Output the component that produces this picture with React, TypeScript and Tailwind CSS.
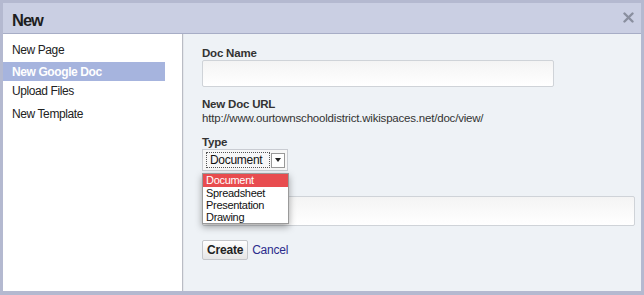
const sideItems = ["New Page", "New Google Doc", "Upload Files", "New Template"];
const docTypes = ["Document", "Spreadsheet", "Presentation", "Drawing"];

export default function App() {
  return (
    <div className="w-[644px] h-[295px] bg-[#b4b9d0] p-[3px] font-['Liberation_Sans',Arial,sans-serif] text-[#222]">
      <div className="flex flex-col w-full h-[288px] bg-white">
        <header className="h-[31px] shrink-0 flex items-center justify-between pl-[9px] pr-[7px] bg-[#cacfe3] border-b border-[#a7adc6]">
          <h1 className="text-[16.5px] font-bold tracking-[-1px] text-[#1e1e1e] leading-none pt-[5px]">New</h1>
          <svg width="11" height="11" viewBox="0 0 11 11" className="mt-[-2px]">
            <path d="M1.5 1.5 L9.5 9.5 M9.5 1.5 L1.5 9.5" stroke="#8a8f9f" strokeWidth="2.4" strokeLinecap="round" />
          </svg>
        </header>

        <div className="flex flex-1 min-h-0">
          <nav className="w-[180px] shrink-0 bg-white border-r border-[#b9bcc4] pt-[5px] text-[12px] tracking-[-0.4px]">
            {sideItems.map((item, i) =>
              i === 1 ? (
                <div key={item} className="h-[19px] mr-[17px] mt-[2px] flex items-center pl-[9px] bg-[#a6b4de] text-white font-bold">
                  {item}
                </div>
              ) : (
                <div key={item} className={`${i === 0 ? "h-[21px]" : i === 2 ? "h-[19px]" : "h-[20px] mt-[4px]"} flex items-center pl-[9px]`}>
                  {item}
                </div>
              )
            )}
          </nav>

          <main className="flex-1 bg-[#eef2f6] border-l border-[#e4e7ec] pl-[18px] pt-[12px] text-[11.5px] tracking-[-0.2px]">
            <label className="block font-bold text-[#333] leading-[14px]">Doc Name</label>
            <div className="w-[352px] h-[27px] border border-[#cfd3d8] rounded-[2px] bg-gradient-to-b from-[#f4f4f4] to-white" />

            <div className="mt-[10px] font-bold text-[#333] leading-[14px]">New Doc URL</div>
            <div className="text-[#333] leading-[14px]">http://www.ourtownschooldistrict.wikispaces.net/doc/view/</div>

            <div className="mt-[10px] font-bold text-[#333] leading-[14px]">Type</div>
            <div className="relative">
              <div className="w-[86px] h-[22px] border border-[#c9ccd2] bg-[#f7f7f7] flex items-center pl-[3px] gap-[1px]">
                <div className="h-[16px] w-[64px] border border-dotted border-[#555] flex items-center pl-[3px] text-[12px] tracking-[-0.3px] text-[#111]">
                  Document
                </div>
                <div className="h-[15px] w-[14px] border border-[#999] bg-white flex items-center justify-center">
                  <svg width="6" height="4" viewBox="0 0 6 4"><path d="M0 0 H6 L3 4 Z" fill="#222" /></svg>
                </div>
              </div>

              <div className="mt-[25px] w-[433px] h-[30px] border border-[#cfd3d8] rounded-[2px] bg-gradient-to-b from-[#f4f4f4] to-white" />

              <ul className="absolute left-0 top-[24px] w-[87px] bg-white border border-[#9a9a9a] shadow-[0_3px_7px_rgba(0,0,0,0.35)] text-[11px] tracking-[-0.3px] leading-[12px] text-[#111]">
                {docTypes.map((t, i) => (
                  <li key={t} className={`pl-[3px] ${i === 0 ? "h-[13px] leading-[13px] bg-[#e84c4f] text-white" : "h-[12px]"}`}>
                    {t}
                  </li>
                ))}
              </ul>
            </div>

            <div className="mt-[14px] flex items-center gap-[4px]">
              <button className="h-[20px] px-[4px] border border-[#c4c6ca] rounded-[2px] bg-gradient-to-b from-white to-[#e6e6e6] font-bold text-[12px] text-[#222]">
                Create
              </button>
              <a className="text-[#2b2b8c] text-[12px]">Cancel</a>
            </div>
          </main>
        </div>
      </div>
    </div>
  );
}
